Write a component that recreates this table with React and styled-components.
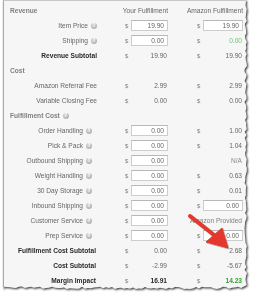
import React from "react";
import styled, { createGlobalStyle } from "styled-components";

const GlobalStyle = createGlobalStyle`
  html, body {
    margin: 0;
    padding: 0;
    background: #ffffff;
  }
  body {
    font-family: "Liberation Sans", Arial, sans-serif;
  }
`;

const W = 244;
const H = 289;

// jagged "torn paper" edge for right and bottom sides
function tornEdge() {
  let seed = 7;
  const rnd = () => {
    seed = (seed * 9301 + 49297) % 233280;
    return seed / 233280;
  };
  const pts = ["0 0", `${W - 1}px 0`];
  for (let y = 3; y < H - 2; y += 3) {
    pts.push(`${(W - rnd() * 2.5).toFixed(1)}px ${y}px`);
  }
  for (let x = W - 3; x > 0; x -= 3) {
    pts.push(`${x}px ${(H - rnd() * 2.5).toFixed(1)}px`);
  }
  pts.push(`0 ${H}px`);
  return `polygon(${pts.join(", ")})`;
}

const TORN = tornEdge();

const Page = styled.div`
  padding-left: 3px;
  width: 256px;
  height: 300px;
  box-sizing: border-box;
`;

const Shadow = styled.div`
  width: ${W}px;
  height: ${H}px;
  filter: drop-shadow(1.5px 1.5px 0.8px rgba(0, 0, 0, 0.85));
`;

const Panel = styled.div`
  position: relative;
  width: ${W}px;
  height: ${H}px;
  box-sizing: border-box;
  padding-top: 2px;
  background: #f6f6f6;
  border-left: 1px solid #a9a9a9;
  border-top: 1px solid #c8c8c8;
  clip-path: ${TORN};
  font-size: 6.6px;
  color: #666;
`;

const Row = styled.div`
  display: grid;
  grid-template-columns: 93px 28px 6px 37px 29px 6px 40px;
  height: 15px;
  align-items: center;
`;

const Label = styled.div`
  display: flex;
  align-items: center;
  justify-content: ${(p) => (p.$section ? "flex-start" : "flex-end")};
  gap: 3px;
  padding-left: ${(p) => (p.$section ? "6px" : "0")};
  padding-right: ${(p) => p.$pr || 0}px;
  white-space: nowrap;
  font-weight: ${(p) => (p.$bold || p.$section ? 700 : 400)};
  color: ${(p) => (p.$section ? "#808080" : p.$bold ? "#2a2a2a" : "#666")};
`;

const ColHead = styled.div`
  grid-column: ${(p) => p.$col};
  white-space: nowrap;
  text-align: right;
  color: #666;
`;

const Dollar = styled.div`
  grid-column: ${(p) => p.$col};
  color: #808080;
  font-size: 6px;
`;

const Value = styled.div`
  grid-column: ${(p) => p.$col};
  text-align: right;
  padding-right: 1px;
  white-space: nowrap;
  font-weight: ${(p) => (p.$bold ? 700 : 400)};
  color: ${(p) => p.$color || "#666"};
`;

const Input = styled.div`
  grid-column: ${(p) => p.$col};
  height: 11px;
  box-sizing: border-box;
  background: #fff;
  border: 1px solid #cdcdcd;
  border-top-color: #b8b8b8;
  text-align: right;
  padding-right: 3px;
  line-height: 9px;
  color: #666;
`;

const Wide = styled.div`
  grid-column: 5 / 8;
  display: flex;
  justify-content: flex-end;
  white-space: nowrap;
  color: #808080;
  padding-right: 1px;
`;

const Help = styled.span`
  display: inline-flex;
  align-items: center;
  justify-content: center;
  width: 6px;
  height: 6px;
  border-radius: 50%;
  background: radial-gradient(circle at 40% 35%, #dcdcdc, #a0a0a0);
  color: #fff;
  font-size: 4.5px;
  font-weight: 700;
  line-height: 6px;
`;

const Arrow = styled.svg`
  position: absolute;
  left: 178px;
  top: 209px;
  overflow: visible;
`;

const cell = (v, col) => {
  if (v == null) return null;
  if (typeof v === "string") {
    return (
      <>
        <Dollar $col={col}>$</Dollar>
        <Value $col={col + 1}>{v}</Value>
      </>
    );
  }
  if (v.input) {
    return (
      <>
        <Dollar $col={col}>$</Dollar>
        <Input $col={col + 1}>{v.input}</Input>
      </>
    );
  }
  return (
    <>
      {!v.noDollar && <Dollar $col={col}>$</Dollar>}
      <Value $col={col + 1} $bold={v.bold} $color={v.color}>
        {v.text}
      </Value>
    </>
  );
};

const rows = [
  { section: "Revenue", heads: true },
  { label: "Item Price", help: true, pr: 0, you: { input: "19.90" }, amz: { input: "19.90" } },
  { label: "Shipping", help: true, pr: 0, you: { input: "0.00" }, amz: { text: "0.00", color: "#6cc46c" } },
  { label: "Revenue Subtotal", bold: true, pr: 0, you: "19.90", amz: "19.90" },
  { section: "Cost" },
  { label: "Amazon Referral Fee", pr: 0, you: "2.99", amz: "2.99" },
  { label: "Variable Closing Fee", pr: 0, you: "0.00", amz: "0.00" },
  { section: "Fulfillment Cost", help: true },
  { label: "Order Handling", help: true, pr: 5, you: { input: "0.00" }, amz: "1.00" },
  { label: "Pick & Pack", help: true, pr: 5, you: { input: "0.00" }, amz: "1.04" },
  { label: "Outbound Shipping", help: true, pr: 5, you: { input: "0.00" }, amz: { text: "N/A", noDollar: true, color: "#8a8a8a" } },
  { label: "Weight Handling", help: true, pr: 5, you: { input: "0.00" }, amz: "0.63" },
  { label: "30 Day Storage", help: true, pr: 5, you: { input: "0.00" }, amz: "0.01" },
  { label: "Inbound Shipping", help: true, pr: 5, you: { input: "0.00" }, amz: { input: "0.00" } },
  { label: "Customer Service", help: true, pr: 5, you: { input: "0.00" }, wide: "Amazon Provided" },
  { label: "Prep Service", help: true, pr: 5, you: { input: "0.00" }, amz: { input: "0.00" } },
  { label: "Fulfillment Cost Subtotal", bold: true, pr: 1, you: "0.00", amz: "2.68" },
  { label: "Cost Subtotal", bold: true, pr: 1, you: "-2.99", amz: "-5.67" },
  { label: "Margin Impact", bold: true, pr: 1, you: { text: "16.91", bold: true, color: "#2a2a2a" }, amz: { text: "14.23", bold: true, color: "#2fa52f" } },
];

export default function App() {
  return (
    <Page>
      <GlobalStyle />
      <Shadow>
        <Panel>
          {rows.map((r, i) =>
            r.section ? (
              <Row key={i}>
                <Label $section>
                  {r.section}
                  {r.help && <Help>?</Help>}
                </Label>
                {r.heads && (
                  <>
                    <ColHead $col="2 / 5">Your Fulfillment</ColHead>
                    <ColHead $col="5 / 8">Amazon Fulfillment</ColHead>
                  </>
                )}
              </Row>
            ) : (
              <Row key={i}>
                <Label $bold={r.bold} $pr={r.pr}>
                  {r.label}
                  {r.help && <Help>?</Help>}
                </Label>
                {cell(r.you, 3)}
                {cell(r.amz, 6)}
                {r.wide && <Wide>{r.wide}</Wide>}
              </Row>
            )
          )}
          <Arrow width="60" height="50" viewBox="0 0 60 50">
            <defs>
              <filter id="as" x="-20%" y="-20%" width="140%" height="140%">
                <feDropShadow dx="0.8" dy="0.8" stdDeviation="0.6" floodColor="#000" floodOpacity="0.35" />
              </filter>
            </defs>
            <g filter="url(#as)" fill="#e2382e" stroke="#e2382e">
              <line x1="8" y1="6" x2="32" y2="25" strokeWidth="4" strokeLinecap="round" />
              <polygon points="24,32 40,18 46,38" strokeWidth="1" strokeLinejoin="round" />
            </g>
          </Arrow>
        </Panel>
      </Shadow>
    </Page>
  );
}
